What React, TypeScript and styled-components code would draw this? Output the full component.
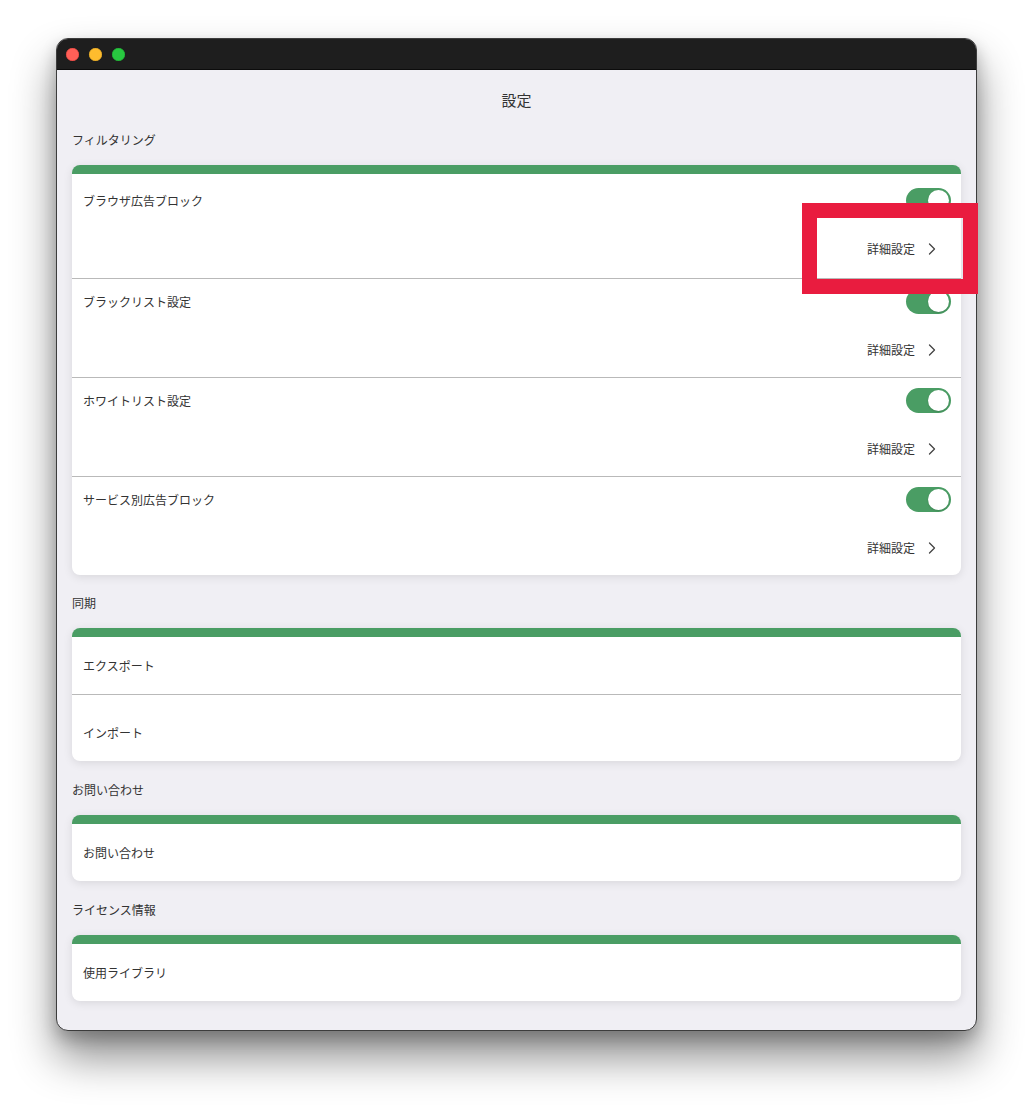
import React from "react";
import styled, { createGlobalStyle } from "styled-components";

const GlobalStyle = createGlobalStyle`
  html, body {
    margin: 0;
    padding: 0;
    background: #ffffff;
  }
  body {
    font-family: "Noto Sans CJK JP", "Noto Sans", sans-serif;
    color: #333333;
  }
`;

type FilterItem = { label: string; enabled: boolean };

const filters: FilterItem[] = [
  { label: "ブラウザ広告ブロック", enabled: true },
  { label: "ブラックリスト設定", enabled: true },
  { label: "ホワイトリスト設定", enabled: true },
  { label: "サービス別広告ブロック", enabled: true },
];

function Chevron() {
  return (
    <svg width="8" height="12" viewBox="0 0 8 12" fill="none">
      <polyline
        points="1.5,1 6.5,6 1.5,11"
        stroke="#444444"
        strokeWidth="1.3"
        strokeLinecap="round"
        strokeLinejoin="round"
      />
    </svg>
  );
}

export default function App() {
  return (
    <Page>
      <GlobalStyle />
      <Window>
        <TitleBar>
          <Light $color="#ff5f57" $ring="#e0443e" />
          <Light $color="#febc2e" $ring="#d8a124" />
          <Light $color="#28c840" $ring="#1fa934" />
        </TitleBar>
        <Content>
          <Title>設定</Title>

          <Section $gap={22}>
            <SectionLabel>フィルタリング</SectionLabel>
            <Card $padTop={4}>
              {filters.map((item, index) => (
                <ToggleRow
                  key={index}
                  $first={index === 0}
                  $last={index === filters.length - 1}
                >
                  <RowHead>
                    <RowLabel>{item.label}</RowLabel>
                    <Switch $on={item.enabled}>
                      <Knob />
                    </Switch>
                  </RowHead>
                  <DetailLink>
                    <span>詳細設定</span>
                    <Chevron />
                  </DetailLink>
                </ToggleRow>
              ))}
            </Card>
          </Section>

          <Section $gap={20}>
            <SectionLabel>同期</SectionLabel>
            <Card>
              <SimpleRow>エクスポート</SimpleRow>
              <SimpleRow $last $extraTop={9}>
                インポート
              </SimpleRow>
            </Card>
          </Section>

          <Section $gap={21}>
            <SectionLabel>お問い合わせ</SectionLabel>
            <Card>
              <SimpleRow $last>お問い合わせ</SimpleRow>
            </Card>
          </Section>

          <Section $gap={21}>
            <SectionLabel>ライセンス情報</SectionLabel>
            <Card>
              <SimpleRow $last>使用ライブラリ</SimpleRow>
            </Card>
          </Section>
        </Content>
      </Window>
      <Highlight />
    </Page>
  );
}

const Page = styled.div`
  position: relative;
  width: 1033px;
  height: 1105px;
  padding: 38px 0 0 56px;
  box-sizing: border-box;
  overflow: hidden;
`;

const Window = styled.div`
  width: 921px;
  height: 993px;
  box-sizing: border-box;
  border: 1px solid #3c3c3c;
  border-radius: 12px;
  overflow: hidden;
  background: #f0eff4;
  box-shadow: 0 26px 44px rgba(0, 0, 0, 0.45), 0 8px 16px rgba(0, 0, 0, 0.22);
  display: flex;
  flex-direction: column;
`;

const TitleBar = styled.div`
  height: 30px;
  flex-shrink: 0;
  background: #1e1e1e;
  display: flex;
  align-items: center;
  gap: 10px;
  padding-left: 9px;
  border-bottom: 1px solid #0c0c0c;
`;

const Light = styled.div<{ $color: string; $ring: string }>`
  width: 13px;
  height: 13px;
  border-radius: 50%;
  background: ${(p) => p.$color};
  box-shadow: inset 0 0 0 0.5px ${(p) => p.$ring};
`;

const Content = styled.div`
  flex: 1;
  padding: 0 15px;
  display: flex;
  flex-direction: column;
`;

const Title = styled.div`
  padding-top: 20px;
  text-align: center;
  font-size: 15px;
  line-height: 20px;
  color: #333333;
`;

const Section = styled.div<{ $gap: number }>`
  margin-top: ${(p) => p.$gap}px;
  display: flex;
  flex-direction: column;
`;

const SectionLabel = styled.div`
  font-size: 12px;
  line-height: 16px;
  margin-bottom: 17px;
  color: #333333;
`;

const Card = styled.div<{ $padTop?: number }>`
  background: #ffffff;
  border-top: 9px solid #4a9d64;
  border-radius: 8px;
  overflow: hidden;
  padding-top: ${(p) => p.$padTop ?? 0}px;
  box-shadow: 0 2px 10px rgba(0, 0, 0, 0.1);
`;

const ToggleRow = styled.div<{ $first?: boolean; $last?: boolean }>`
  height: ${(p) => (p.$first ? 101 : p.$last ? 98 : 99)}px;
  box-sizing: border-box;
  padding: 10px 10px 0 11px;
  border-bottom: ${(p) => (p.$last ? "none" : "1px solid #b9b9b9")};
  display: flex;
  flex-direction: column;
`;

const RowHead = styled.div`
  height: 25px;
  display: flex;
  align-items: center;
  justify-content: space-between;
`;

const RowLabel = styled.div`
  font-size: 12px;
  line-height: 16px;
  color: #333333;
`;

const Switch = styled.div<{ $on: boolean }>`
  width: 45px;
  height: 25px;
  border-radius: 13px;
  background: ${(p) => (p.$on ? "#4a9d64" : "#d0d0d0")};
  display: flex;
  align-items: center;
  justify-content: ${(p) => (p.$on ? "flex-end" : "flex-start")};
  padding: 0 2px;
  box-sizing: border-box;
`;

const Knob = styled.div`
  width: 21px;
  height: 21px;
  border-radius: 50%;
  background: #ffffff;
  box-shadow: 0 1px 2px rgba(0, 0, 0, 0.15);
`;

const DetailLink = styled.div`
  margin-top: 28px;
  height: 16px;
  display: flex;
  align-items: center;
  justify-content: flex-end;
  gap: 13px;
  padding-right: 15px;
  font-size: 12px;
  line-height: 16px;
  color: #333333;
`;

const SimpleRow = styled.div<{ $last?: boolean; $extraTop?: number }>`
  height: ${(p) => 57 + (p.$extraTop ?? 0) + (p.$last ? 0 : 1)}px;
  box-sizing: border-box;
  padding: ${(p) => p.$extraTop ?? 0}px 11px 0;
  display: flex;
  align-items: center;
  font-size: 12px;
  color: #333333;
  border-bottom: ${(p) => (p.$last ? "none" : "1px solid #b9b9b9")};
`;

const Highlight = styled.div`
  position: absolute;
  left: 802px;
  top: 203px;
  width: 176px;
  height: 91px;
  box-sizing: border-box;
  border: 15px solid #e91c3f;
`;
